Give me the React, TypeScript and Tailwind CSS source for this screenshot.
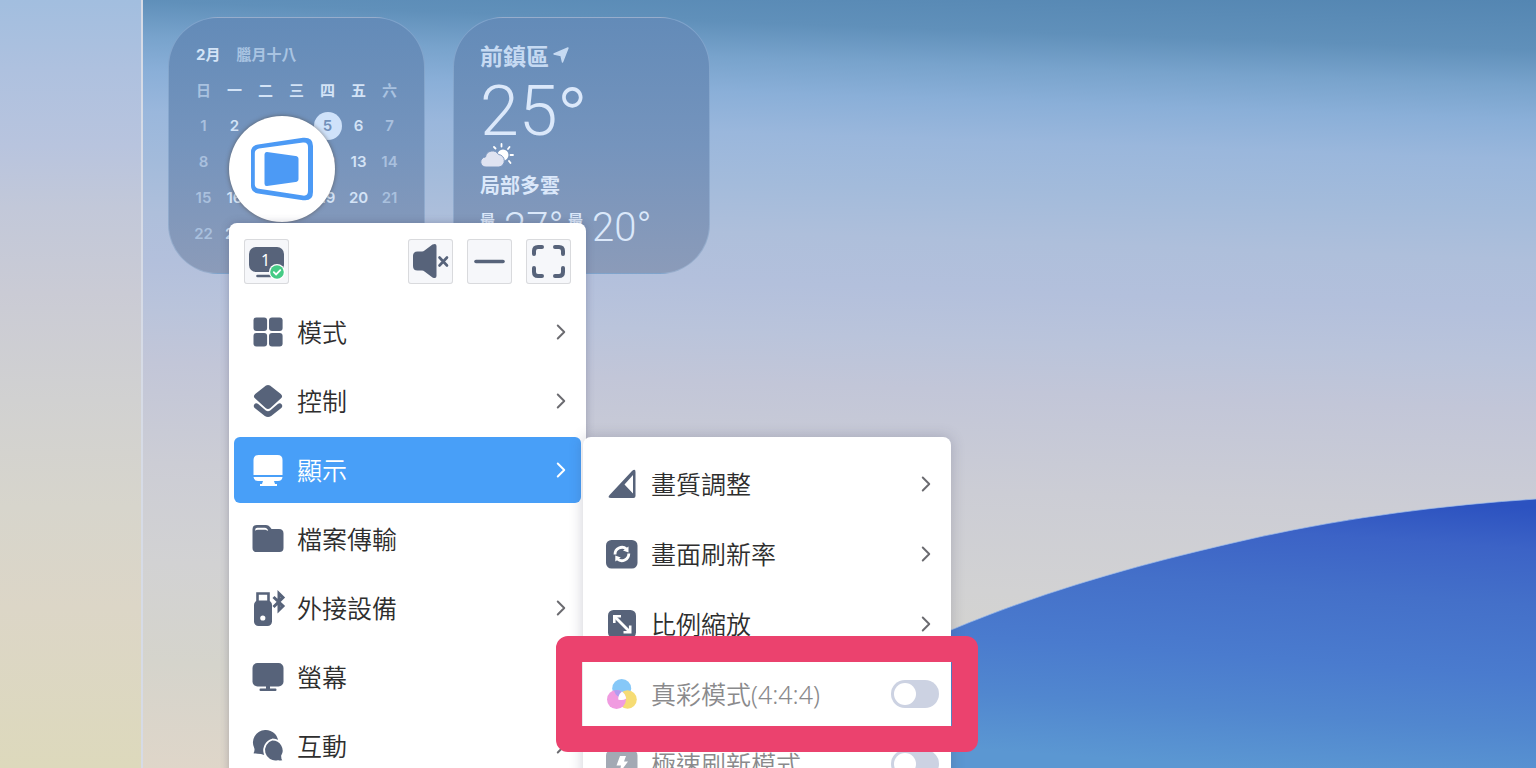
import { useState, type ReactNode } from "react";
import { ChevronRight } from "lucide-react";

type IconProps = { children: ReactNode };

function Icon({ children }: IconProps) {
  return (
    <svg
      viewBox="0 0 32 32"
      className="size-8 shrink-0 overflow-visible"
      fill="currentColor"
      aria-hidden="true"
    >
      {children}
    </svg>
  );
}

function ToolIcon({ children }: IconProps) {
  return (
    <svg viewBox="0 0 45 45" className="size-full" fill="currentColor" aria-hidden="true">
      {children}
    </svg>
  );
}

const GridIcon = () => (
  <Icon>
    <rect x="1.500" y="1.500" width="13.600" height="13.600" rx="3" />
    <rect x="17" y="1.500" width="13.600" height="13.600" rx="3" />
    <rect x="1.500" y="17" width="13.600" height="13.600" rx="3" />
    <rect x="17" y="17" width="13.600" height="13.600" rx="3" />
  </Icon>
);

const LayersIcon = () => (
  <Icon>
    <path d="M14 .6q2-1.400 4 0l10.800 8.400q2.600 2.300 0 4.600l-10.400 9.400q-2.400 1.800-4.800 0L3.200 13.600q-2.600-2.300 0-4.600z" />
    <path d="M2.400 19.200q1.600-1.900 3.800-.2l7.600 6.400q2.200 1.600 4.400 0l7.600-6.400q2.200-1.700 3.800.2 1.600 2.200-.6 4l-9.800 7.800q-3.200 2.200-6.400 0L3 23.200q-2.200-1.800-.6-4z" />
  </Icon>
);

const DisplayIcon = () => (
  <Icon>
    <path d="M6.500 1h19q5 0 5 5v15h-29V6q0-5 5-5z" />
    <path d="M1.500 23h29q-.4 4-4.500 4h-4l1 3h2v2H8v-2h2l1-3H6q-4.100 0-4.500-4z" />
  </Icon>
);

const FolderIcon = () => (
  <Icon>
    <path d="M5 2h9q2.500 0 4 2l1.500 2H27q4.500 0 4.500 4.500V25q0 4-4 4h-23q-4 0-4-4V6.500Q.5 2 5 2z" />
    <path d="M3.200 7.800V6.800Q3.200 4.800 5.300 4.800h7.200q1.700 0 2.700 1.200L16.200 7.200l-1 .6q-.8-1-2-1H6q-1.800 0-2.800 1z" fill="#fff" />
  </Icon>
);

const UsbIcon = () => (
  <Icon>
    <path d="M5.500 10V1.500h11V10" fill="none" stroke="currentColor" strokeWidth="2.600" />
    <rect x="2" y="8.500" width="18" height="25.500" rx="4.500" />
    <circle cx="10.800" cy="26" r="2.600" fill="#fff" />
    <path
      d="m21.500 5 9.500 9-4 4V1.500l4 4-9.500 9.500"
      fill="none"
      stroke="currentColor"
      strokeWidth="3"
    />
  </Icon>
);

const ScreenIcon = () => (
  <Icon>
    <rect x=".5" y="2" width="31" height="23.500" rx="5" />
    <path d="M14 25h4v2.500h5.500q1 0 1 1.200t-1 1.200h-15q-1 0-1-1.200t1-1.200H14z" />
  </Icon>
);

const ChatIcon = () => (
  <Icon>
    <path d="M13 0a12.500 12.500 0 1 1-4 24q-3.500 0-7.500-.8 1.500-2.500.8-5A12.500 12.500 0 0 1 13 0z" />
    <path
      d="M20.500 9.500a11 11 0 0 1 9.500 16.500q-.4 2.600 2 5-3.500.8-6 0A11 11 0 1 1 20.500 9.500z"
      stroke="#fff"
      strokeWidth="1.800"
    />
  </Icon>
);

const QualityIcon = () => (
  <Icon>
    <path
      fillRule="evenodd"
      d="M29.500 4v24q0 2-2 2H5q-4 0-1.400-3L26 3q3.500-2.800 3.500 1zM27 7l-8.500 9.500L27 25.500z"
    />
  </Icon>
);

const RefreshIcon = () => (
  <Icon>
    <rect x="0" y="2" width="31.500" height="28.500" rx="5.500" />
    <g fill="none" stroke="#fff" strokeWidth="2.800">
      <path d="M9 16.500a7 7 0 0 1 11.500-5.500" />
      <path d="M22.800 15.500a7 7 0 0 1-11.500 5.500" />
    </g>
    <path d="M22.500 8.500v6l-5.500-2zM9.300 23.500v-6l5.500 2z" fill="#fff" />
  </Icon>
);

const ScaleIcon = () => (
  <Icon>
    <rect x="2" y="2" width="28" height="28" rx="5.500" />
    <path d="m9 9 14.500 14.500" stroke="#fff" strokeWidth="2.800" />
    <path
      d="M8.300 15V8.300H15M24.200 17.500v6.700h-6.700"
      fill="none"
      stroke="#fff"
      strokeWidth="2.600"
    />
  </Icon>
);

const ColorIcon = () => (
  <Icon>
    <circle cx="15.700" cy="10.500" r="9.500" fill="#86c8f8" />
    <circle cx="21.500" cy="21.500" r="9.300" fill="#f6dc74" />
    <circle cx="10.500" cy="21.500" r="9.500" fill="#f09be0" />
    <path d="M8 12.300a9.500 9.500 0 0 1 8.500 2 9.500 9.500 0 0 0-3.500 4.700 9.500 9.500 0 0 1-5-6.700z" fill="#b09df0" />
    <path d="M16 13.500q3.500 2.500 4.200 7-3.500 2.500-8 1-.2-5 3.800-8z" fill="#fff" />
  </Icon>
);

const BoltIcon = () => (
  <Icon>
    <rect x="0" y="2" width="31.500" height="29" rx="5.500" />
    <path d="M14 8h6l-2 5.500h4L13.500 25l1.500-7.500h-4.500z" fill="#fff" />
  </Icon>
);

const WEEKDAYS = ["日", "一", "二", "三", "四", "五", "六"];
const WEEKS = [
  [1, 2, 3, 4, 5, 6, 7],
  [8, 9, 10, 11, 12, 13, 14],
  [15, 16, 17, 18, 19, 20, 21],
  [22, 23, 24, 25, 26, 27, 28],
];
const TODAY = 5;

const MENU = [
  { label: "模式", icon: <GridIcon />, sub: true },
  { label: "控制", icon: <LayersIcon />, sub: true },
  { label: "顯示", icon: <DisplayIcon />, sub: true },
  { label: "檔案傳輸", icon: <FolderIcon />, sub: false },
  { label: "外接設備", icon: <UsbIcon />, sub: true },
  { label: "螢幕", icon: <ScreenIcon />, sub: false },
  { label: "互動", icon: <ChatIcon />, sub: true },
];

const SUBMENU = [
  { label: "畫質調整", icon: <QualityIcon /> },
  { label: "畫面刷新率", icon: <RefreshIcon /> },
  { label: "比例縮放", icon: <ScaleIcon /> },
];

const widgetClass =
  "h-[257px] w-[257px] shrink-0 overflow-hidden rounded-[50px] border border-[#a9c8e8]/40 bg-linear-to-b from-[#638bb8] via-[#7594bd] to-[#8b9bb9]";

const isWeekend = (day: number) => day === 0 || day === 6;

function CalendarWidget() {
  return (
    <section className={`${widgetClass} px-[19px] pt-[27px] text-[#d3e3f6]`}>
      <h2 className="flex h-5 items-center gap-4 pl-2 font-['Inter','Noto_Sans_CJK_TC',sans-serif] text-[15px] font-bold">
        <span>2月</span>
        <span className="text-[#a9c4e2]">臘月十八</span>
      </h2>
      <table className="mt-[7px] w-full table-fixed text-center font-semibold">
        <thead>
          <tr className="h-9 text-[15px]">
            {WEEKDAYS.map((name, day) => (
              <th key={name} className={isWeekend(day) ? "p-0 font-bold text-[#a9c2e0]" : "p-0 font-bold"}>
                {name}
              </th>
            ))}
          </tr>
        </thead>
        <tbody className="font-['Inter',sans-serif] text-[15px]">
          {WEEKS.map((week) => (
            <tr key={week[0]} className="h-9">
              {week.map((date, day) => (
                <td key={date} className={isWeekend(day) ? "p-0 text-[#a9c0de]" : "p-0"}>
                  {date === TODAY ? (
                    <span className="mx-auto flex size-7 items-center justify-center rounded-full bg-[#cfe2fa] text-[#7190ba]">
                      {date}
                    </span>
                  ) : (
                    date
                  )}
                </td>
              ))}
            </tr>
          ))}
        </tbody>
      </table>
    </section>
  );
}

function WeatherWidget() {
  return (
    <section className={`${widgetClass} pl-[26px] pt-[23px] text-[#dbe8fa]`}>
      <h2 className="flex h-7 items-center gap-1 text-[23px] font-bold text-[#c6daf2]">
        前鎮區
        <svg viewBox="0 0 16 16" className="size-4" fill="currentColor" aria-hidden="true">
          <path
            d="M15 1 9.500 15 8 8.500 1 7z"
            stroke="currentColor"
            strokeWidth="1.400"
            strokeLinejoin="round"
          />
        </svg>
      </h2>
      <p className="mt-[10px] flex h-16 items-center font-[Roboto] text-[70px] leading-[64px] font-[350]">
        25<span className="font-[Inter] text-[64px]">°</span>
      </p>
      <svg viewBox="0 0 34 24" className="h-6 w-[34px]" aria-hidden="true">
        <circle cx="23" cy="12" r="5.500" fill="#fff" />
        <g stroke="#fff" strokeWidth="1.800" strokeLinecap="round">
          <path d="M21.500 1v2.500M29.500 4 28 6M33 12h-2.500M30.500 20 29 18M14 4l1.500 1.500" />
        </g>
        <path
          d="M6 24a5 5 0 0 1-.5-10 7 7 0 0 1 13-2.500A6.300 6.300 0 0 1 19 24z"
          fill="#dfe3f1"
          stroke="#7b97bf"
          strokeWidth="1"
        />
      </svg>
      <p className="mt-[6px] text-[20px] leading-6 font-bold">局部多雲</p>
      <p className="mt-[11px] flex h-10 items-center text-[40px] font-[350]">
        <span className="mr-2 w-4 text-[15px] leading-4 font-bold">最高</span>
        <span className="w-16 font-[Roboto]">27°</span>
        <span className="mr-2 w-4 text-[15px] leading-4 font-bold">最低</span>
        <span className="font-[Roboto]">20°</span>
      </p>
    </section>
  );
}

const toolClass =
  "size-[45px] rounded-[3px] bg-[#f6f7fa] text-[#57637a] ring-1 ring-[#d9dadd] ring-inset";

function Toolbar() {
  return (
    <div className="flex gap-[14px] px-[10px]">
      <button type="button" aria-label="螢幕 1" className={`${toolClass} mr-auto`}>
        <ToolIcon>
          <rect x="5" y="8" width="35" height="25" rx="7" />
          <path d="M13.500 37h13" stroke="currentColor" strokeWidth="2.600" strokeLinecap="round" />
          <text x="21.500" y="26.500" textAnchor="middle" fill="#fff" fontSize="16" fontWeight="400">
            1
          </text>
          <circle cx="33" cy="33" r="8" fill="#fff" />
          <circle cx="33" cy="33" r="6.800" fill="#45cb85" />
          <path d="m29.800 33.200 2.300 2.300 4.200-4.300" fill="none" stroke="#fff" strokeWidth="1.800" strokeLinecap="round" />
        </ToolIcon>
      </button>
      <button type="button" aria-label="靜音" className={toolClass}>
        <ToolIcon>
          <path d="M5 17q0-4.500 4.500-4.500H14q1.500 0 2.500-1l8-6Q28.500 4 28.500 7v30q0 3-4 1.500l-8-6q-1-1-2.500-1H9.500Q5 31.500 5 27z" />
          <path d="m31.500 18.500 7.500 8M39 18.500l-7.500 8" stroke="currentColor" strokeWidth="2.600" strokeLinecap="round" />
        </ToolIcon>
      </button>
      <button type="button" aria-label="最小化" className={toolClass}>
        <ToolIcon>
          <path d="M9 22.500h27" stroke="currentColor" strokeWidth="3.600" strokeLinecap="round" />
        </ToolIcon>
      </button>
      <button type="button" aria-label="全螢幕" className={toolClass}>
        <ToolIcon>
          <g fill="none" stroke="currentColor" strokeWidth="4" strokeLinecap="round">
            <path d="M8 15v-3q0-4 4-4h4M29 8h4q4 0 4 4v3M37 29v4q0 4-4 4h-4M16 37h-4q-4 0-4-4v-4" />
          </g>
        </ToolIcon>
      </button>
    </div>
  );
}

const rowClass = "flex h-[66px] w-full items-center gap-[13px] rounded-md pr-[7px] pl-[18px] text-left";

function Chevron() {
  return <ChevronRight size={26} strokeWidth={1.8} className="ml-auto text-[#6b6b70]" />;
}

function MainMenu({ active, onSelect }: { active: string; onSelect: (label: string) => void }) {
  return (
    <nav className="w-[357px] rounded-lg bg-white px-[5px] pt-4 shadow-[0_0_8px_rgba(60,60,90,0.3)]">
      <Toolbar />
      <ul className="mt-[15px] flex flex-col gap-[3px]">
        {MENU.map((item) => (
          <li key={item.label}>
            <button
              type="button"
              onClick={() => onSelect(item.label)}
              className={
                item.label === active
                  ? `${rowClass} bg-[#489ff8] text-white [&_.ml-auto]:text-white`
                  : `${rowClass} text-[#57637a]`
              }
            >
              {item.icon}
              <span className={item.label === active ? "" : "text-[#2e2e2e]"}>{item.label}</span>
              {item.sub && <Chevron />}
            </button>
          </li>
        ))}
      </ul>
    </nav>
  );
}

type SwitchRowProps = { id: string; label: string; icon: ReactNode };

function SwitchRow({ id, label, icon }: SwitchRowProps) {
  return (
    <div className={`${rowClass} text-[#a3a9b4]`}>
      {icon}
      <label htmlFor={id} className="text-[#8a8a8c]">
        {label}
      </label>
      <input
        id={id}
        type="checkbox"
        role="switch"
        className="ml-auto h-7 w-12 shrink-0 appearance-none rounded-full bg-[#ccd2e2] before:m-[3px] before:block before:size-[22px] before:rounded-full before:bg-white checked:bg-[#489ff8] checked:before:ml-[23px]"
      />
    </div>
  );
}

function DisplayMenu() {
  return (
    <ul className="flex w-[368px] flex-col gap-1 rounded-lg bg-white px-[5px] pt-[14px] shadow-[0_0_14px_rgba(60,60,90,0.25)]">
      {SUBMENU.map((item) => (
        <li key={item.label}>
          <button type="button" className={`${rowClass} text-[#57637a]`}>
            {item.icon}
            <span className="text-[#2e2e2e]">{item.label}</span>
            <Chevron />
          </button>
        </li>
      ))}
      <li className="relative z-10">
        <SwitchRow id="true-color" label="真彩模式(4:4:4)" icon={<ColorIcon />} />
        <span className="pointer-events-none absolute -inset-x-8 -inset-y-[25px] rounded-xl border-[26px] border-[#eb426e]" />
      </li>
      <li>
        <SwitchRow id="turbo-refresh" label="極速刷新模式" icon={<BoltIcon />} />
      </li>
    </ul>
  );
}

function Wallpaper() {
  return (
    <svg
      viewBox="0 0 836 270"
      className="absolute right-0 bottom-0 h-[270px] w-[836px]"
      aria-hidden="true"
    >
      <defs>
        <linearGradient id="hill" gradientUnits="userSpaceOnUse" x1="700" y1="0" x2="680" y2="280">
          <stop offset="0" stopColor="#2c52c0" />
          <stop offset="0.15" stopColor="#3c63c6" />
          <stop offset="0.35" stopColor="#4470c9" />
          <stop offset="0.6" stopColor="#4a7bce" />
          <stop offset="0.8" stopColor="#5187cf" />
          <stop offset="1" stopColor="#5b97d2" />
        </linearGradient>
      </defs>
      <path
        d="M0 270C90 212 170 170 251 132C354 89 456 62 559 39C651 19 744 7 836 1V270Z"
        fill="url(#hill)"
      />
      <path
        d="M0 270C90 212 170 170 251 132C354 89 456 62 559 39C651 19 744 7 836 1"
        fill="none"
        stroke="#9dbcec"
        strokeOpacity="0.7"
      />
    </svg>
  );
}

export default function App() {
  const [active, setActive] = useState("顯示");

  return (
    <div className="flex h-screen overflow-hidden font-['Noto_Sans_CJK_TC',sans-serif]">
      <aside className="w-[143px] shrink-0 border-r-2 border-[#d6dbe6] bg-[linear-gradient(180deg,#a2bedf_0%,#aec1df_9%,#b8c4de_19%,#c2c8d9_27%,#cacbd5_38%,#d1d1d1_52%,#d7d5cc_66%,#dcd6c7_79%,#ddd9bc_100%)]" />

      <main className="relative min-w-0 flex-1 overflow-hidden bg-[linear-gradient(182deg,#5486b2_0px,#6090ba_50px,#78a3cc_85px,#8aafd8_120px,#9ab7dc_160px,#a3bbdb_210px,#aebfdb_260px,#b3c0dc_310px,#bac4db_360px,#c2c6d8_410px,#cccdd5_510px,#d2d2d3_610px,#d5d4cc_710px,#dfd6c9_817px)]">
        <Wallpaper />
        <div className="relative flex gap-7 pt-[17px] pl-[25px]">
          <CalendarWidget />
          <WeatherWidget />
        </div>

        {/* floating control ball and the menus that open from it */}
        <button
          type="button"
          aria-label="控制選單"
          className="absolute top-[116px] left-[86px] flex size-[106px] items-center justify-center rounded-full bg-white shadow-[0_0_4px_rgba(70,60,50,0.6)]"
        >
          <svg viewBox="0 0 64 64" className="size-16" fill="#4c9af5" aria-hidden="true">
            <path
              fillRule="evenodd"
              d="M8 7.500 53 .8Q63 0 63 9v46q0 9.500-10 8.200L8 56.500Q1 55 1 49V15q0-6.500 7-7.500zM9 11.500Q4.800 12.500 4.800 16v31.500q0 3.500 4.200 4.300L53 58.600q5 .6 5-4.600V10q0-5-5-4.500z"
            />
            <path d="M17 15l28.500 4q3 .4 3 3v20q0 2.600-3 3L17 49q-2.500.3-2.500-2.500v-29Q14.500 14.700 17 15z" />
          </svg>
        </button>
        <div className="absolute top-[223px] left-[86px] font-['Noto_Sans','Noto_Sans_CJK_TC',sans-serif] text-[25px] leading-9 font-[350]">
          <MainMenu active={active} onSelect={setActive} />
          {active === "顯示" && (
            <div className="absolute top-[214px] left-[354px]">
              <DisplayMenu />
            </div>
          )}
        </div>
      </main>
    </div>
  );
}
